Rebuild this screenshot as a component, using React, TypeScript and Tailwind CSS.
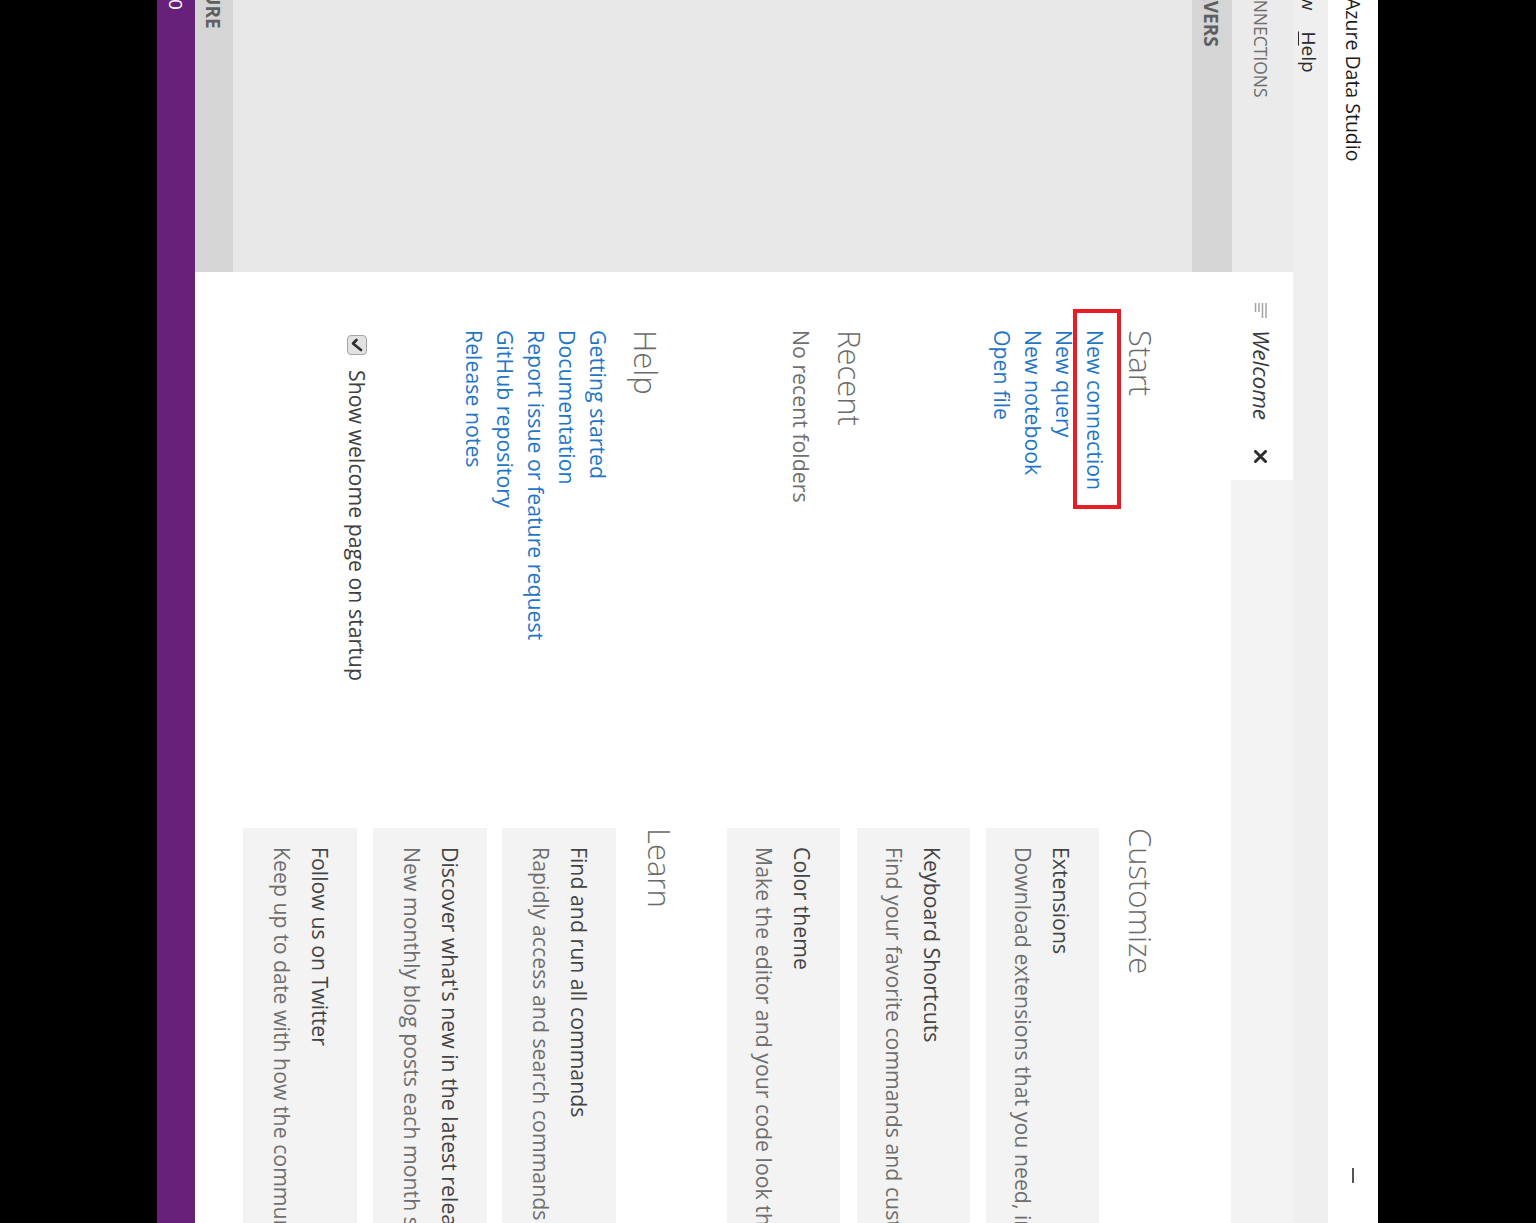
import React from "react";

const linkCls = "text-[#1f76c7] leading-[31px] whitespace-nowrap";
const headCls = "text-[31px] leading-[31px] font-light text-[#6b6b6b] whitespace-nowrap";

function Card({ title, desc, cls }: { title: string; desc: string; cls: string }) {
  return (
    <div className={cls}>
      <div className="text-[#444444]">{title}</div>
      <div className="text-[#6f6f6f]">{desc}</div>
    </div>
  );
}

function Window() {
  return (
    <div className="w-[1223px] h-[1221px] flex flex-col bg-white overflow-hidden font-['Open_Sans','Noto_Sans',sans-serif]">
      {/* title bar */}
      <div className="h-[50px] shrink-0 flex items-center bg-white">
        <span className="ml-[-2px] text-[19.5px] text-[#1b1b1b] whitespace-nowrap">Azure Data Studio</span>
        <div className="ml-auto mr-[40px] w-[15px] h-[2px] bg-[#555555]" />
      </div>
      {/* menu bar */}
      <div className="h-[35px] shrink-0 bg-[#efefef] flex items-start pt-[4px] text-[19px] leading-[31px] text-[#2b2b2b]">
        <span className="ml-[-31px] whitespace-nowrap">View</span>
        <span className="ml-[21px] whitespace-nowrap">
          <span className="underline underline-offset-[3px]">H</span>elp
        </span>
      </div>
      <div className="flex flex-1 min-h-0">
        {/* sidebar */}
        <div className="w-[272px] shrink-0 flex flex-col bg-[#e8e8e8]">
          <div className="h-[61px] shrink-0 bg-[#ebebeb] flex items-center pt-[3px]">
            <span className="ml-[-25px] text-[17.5px] text-[#6f6f6f] whitespace-nowrap">CONNECTIONS</span>
          </div>
          <div className="h-[40px] shrink-0 bg-[#d5d5d5] flex items-center pt-[3px]">
            <span className="ml-[-33px] text-[19px] font-bold text-[#5f5f5f] whitespace-nowrap">SERVERS</span>
          </div>
          <div className="flex-1" />
          <div className="h-[38px] shrink-0 bg-[#d5d5d5] flex items-center pt-[2px]">
            <span className="ml-[-33px] text-[19px] font-bold text-[#5f5f5f] whitespace-nowrap">AZURE</span>
          </div>
        </div>
        {/* editor */}
        <div className="flex-1 flex flex-col min-w-0">
          <div className="h-[62px] shrink-0 bg-[#f3f3f3] flex">
            <div className="w-[208px] h-full bg-white flex items-center pt-[2px]">
              <svg className="ml-[31px] shrink-0" width="15" height="15" viewBox="0 0 15 15">
                <g stroke="#a3a3a3" strokeWidth="1.5">
                  <line x1="0" y1="2" x2="15" y2="2" />
                  <line x1="0" y1="5.5" x2="15" y2="5.5" />
                  <line x1="0" y1="9" x2="9" y2="9" />
                  <line x1="0" y1="12.5" x2="9" y2="12.5" />
                </g>
              </svg>
              <span className="ml-[12px] italic text-[22.6px] text-[#3a3a3a] whitespace-nowrap">Welcome</span>
              <svg className="ml-[30px] shrink-0" width="13" height="13" viewBox="0 0 13 13">
                <path d="M1.5 1.5 L11.5 11.5 M11.5 1.5 L1.5 11.5" stroke="#2d2d2d" strokeWidth="3" strokeLinecap="round" />
              </svg>
            </div>
          </div>
          {/* welcome page */}
          <div className="flex-1 relative bg-white flex pl-[58px] text-[21.3px] overflow-hidden">
            <div className="w-[498px] shrink-0 flex flex-col pt-[75px]">
              <div className={headCls}>Start</div>
              <div className="mt-[14px] flex flex-col">
                <span className={linkCls}>New connection</span>
                <span className={linkCls}>New query</span>
                <span className={linkCls}>New notebook</span>
                <span className={linkCls}>Open file</span>
              </div>
              <div className={`mt-[122px] ${headCls}`}>Recent</div>
              <div className="mt-[17px] leading-[31px] text-[#6f6f6f] whitespace-nowrap">No recent folders</div>
              <div className={`mt-[125px] ${headCls}`}>Help</div>
              <div className="mt-[16px] flex flex-col">
                <span className={linkCls}>Getting started</span>
                <span className={linkCls}>Documentation</span>
                <span className={linkCls}>Report issue or feature request</span>
                <span className={linkCls}>GitHub repository</span>
                <span className={linkCls}>Release notes</span>
              </div>
              <div className="mt-[86px] h-[31px] flex items-center">
                <div className="ml-[5px] w-[20px] h-[20px] rounded-[4px] border border-[#a5a5a5] bg-[#e2e2e2] flex items-center justify-center shrink-0">
                  <svg width="14" height="14" viewBox="0 0 14 14">
                    <path d="M2 7.5 L5.5 11 L12 3" fill="none" stroke="#2e2e2e" strokeWidth="2.6" strokeLinecap="round" strokeLinejoin="round" />
                  </svg>
                </div>
                <span className="ml-[15px] leading-[31px] text-[#404040] whitespace-nowrap">Show welcome page on startup</span>
              </div>
            </div>
            <div className="w-[620px] shrink-0 flex flex-col pt-[75px]">
              <div className={headCls}>Customize</div>
              <div className="mt-[26px] flex flex-col">
                <Card
                  cls="h-[113px] w-[620px] bg-[#f3f3f3] pl-[19px] pt-[19px] leading-[38px] whitespace-nowrap overflow-hidden"
                  title="Extensions"
                  desc="Download extensions that you need, including the SQL Server Admin pack and more"
                />
                <div className="h-[16px]" />
                <Card
                  cls="h-[113px] w-[620px] bg-[#f3f3f3] pl-[19px] pt-[19px] leading-[38px] whitespace-nowrap overflow-hidden"
                  title="Keyboard Shortcuts"
                  desc="Find your favorite commands and customize them"
                />
                <div className="h-[17px]" />
                <Card
                  cls="h-[113px] w-[620px] bg-[#f3f3f3] pl-[19px] pt-[19px] leading-[38px] whitespace-nowrap overflow-hidden"
                  title="Color theme"
                  desc="Make the editor and your code look the way you love"
                />
              </div>
              <div className={`mt-[52px] ${headCls}`}>Learn</div>
              <div className="mt-[28px] flex flex-col">
                <Card
                  cls="h-[114px] w-[620px] bg-[#f3f3f3] pl-[19px] pt-[18px] leading-[38px] whitespace-nowrap overflow-hidden"
                  title="Find and run all commands"
                  desc="Rapidly access and search commands from the Command Palette (Ctrl+Shift+P)"
                />
                <div className="h-[15px]" />
                <Card
                  cls="h-[114px] w-[620px] bg-[#f3f3f3] pl-[19px] pt-[18px] leading-[38px] whitespace-nowrap overflow-hidden"
                  title="Discover what's new in the latest release"
                  desc="New monthly blog posts each month showcasing our new features"
                />
                <div className="h-[16px]" />
                <Card
                  cls="h-[114px] w-[620px] bg-[#f3f3f3] pl-[19px] pt-[18px] leading-[38px] whitespace-nowrap overflow-hidden"
                  title="Follow us on Twitter"
                  desc="Keep up to date with how the community is using Azure Data Studio and to talk directly with the engineers."
                />
              </div>
            </div>
            {/* red annotation box */}
            <div className="absolute left-[37px] top-[110px] w-[200px] h-[48px] border-[4px] border-[#e81c24] pointer-events-none" />
          </div>
        </div>
      </div>
      {/* status bar */}
      <div className="h-[38px] shrink-0 bg-[#68217a] flex items-center">
        <span className="ml-[-1px] text-[19px] text-white leading-none">0</span>
      </div>
    </div>
  );
}

export default function App() {
  return (
    <div className="w-[1536px] h-[1223px] bg-black flex overflow-hidden">
      <div className="w-[157px] shrink-0" />
      <div className="w-[1221px] h-[1223px] shrink-0 relative overflow-hidden">
        <div className="absolute top-0 left-0 origin-top-left translate-x-[1221px] rotate-90">
          <Window />
        </div>
      </div>
      <div className="flex-1" />
    </div>
  );
}
